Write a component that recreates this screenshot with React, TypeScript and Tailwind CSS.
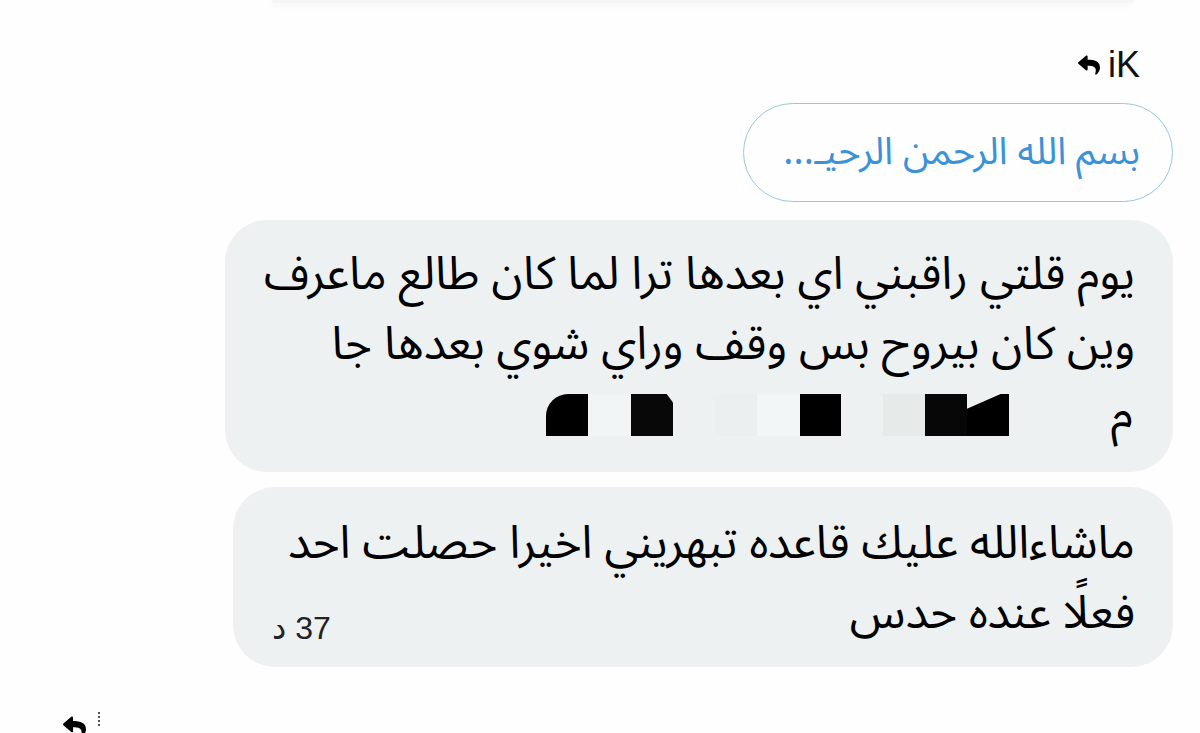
import { FaReply } from "react-icons/fa";

const arabic = { fontFamily: '"Noto Sans Arabic", "DejaVu Sans", "Noto Sans", sans-serif' };

function Redacted() {
  // line of the first bubble that was blacked out in the screenshot
  return (
    <div className="flex items-center h-[70px]" dir="ltr">
      <div className="w-[321px]" />
      <div className="w-[42px] h-[42px] bg-black rounded-tl-[22px]" />
      <div className="w-[43px] h-[42px] bg-[#f2f5f6]" />
      <div className="w-[42px] h-[42px] bg-[#080808] [clip-path:polygon(0_0,85%_0,100%_20%,100%_100%,0_100%)]" />
      <div className="w-[42px] h-[42px]" />
      <div className="w-[42px] h-[42px] bg-[#ebeff0]" />
      <div className="w-[43px] h-[42px] bg-[#f3f6f7]" />
      <div className="w-[41px] h-[42px] bg-black" />
      <div className="w-[42px] h-[42px]" />
      <div className="w-[42px] h-[42px] bg-[#e6eae9]" />
      <div className="w-[42px] h-[42px] bg-[#070707]" />
      <div className="w-[42px] h-[42px] bg-black [clip-path:polygon(0_35%,80%_0,100%_0,100%_100%,0_100%)]" />
      <div className="flex-1" />
      <span className="text-[46px] leading-none text-black pr-[40px]" style={arabic}>
        م
      </span>
    </div>
  );
}

export default function App() {
  return (
    <div className="w-[1200px] h-[733px] bg-[#fefefe] overflow-hidden flex flex-col *:shrink-0">
      <div className="ml-[272px] w-[862px] h-[3px] bg-[#f3f5f7] rounded-b-xl shadow-[0_2px_6px_rgba(0,0,0,0.06)]" />

      <div className="flex justify-end items-center gap-[8px] pr-[60px] mt-[46px] h-[32px]">
        <FaReply className="w-[22px] h-[22px] text-black" />
        <span className="text-[36px] leading-none text-[#111]" style={{ fontFamily: '"Liberation Sans", Arial, sans-serif' }}>
          iK
        </span>
      </div>

      <div className="flex justify-end pr-[27px] mt-[22px]">
        <div
          className="w-[430px] h-[99px] rounded-full border-[1.5px] border-[#98c6e6] flex items-center pr-[32px] text-[#3a93d8] text-[38px]"
          dir="rtl"
          style={arabic}
        >
          بسم الله الرحمن الرحيـ...
        </div>
      </div>

      <div className="ml-[225px] mr-[27px] mt-[18px] h-[252px] rounded-[42px] bg-[#edf1f2] pt-[20px]">
        <div dir="rtl" className="pr-[38px] text-[46px] leading-[70px] text-black" style={arabic}>
          <div>يوم قلتي راقبني اي بعدها ترا لما كان طالع ماعرف</div>
          <div>وين كان بيروح بس وقف وراي شوي بعدها جا</div>
        </div>
        <Redacted />
      </div>

      <div className="ml-[233px] mr-[27px] mt-[15px] h-[180px] rounded-[42px] bg-[#edf1f2] pt-[22px] relative">
        <div dir="rtl" className="pr-[38px] text-[46px] leading-[70px] text-black" style={arabic}>
          <div>ماشاءالله عليك قاعده تبهريني اخيرا حصلت احد</div>
          <div>فعلًا عنده حدس</div>
        </div>
        <span
          className="absolute left-[39px] top-[125px] text-[32px] leading-none text-[#222]"
          dir="rtl"
          style={{ fontFamily: '"Liberation Sans", "DejaVu Sans", sans-serif' }}
        >
          37 د
        </span>
      </div>

      <div className="flex items-start gap-[12px] pl-[63px] mt-[41px]">
        <FaReply className="w-[23px] h-[23px] text-black mt-[7px]" />
        <div className="flex flex-col gap-[2px] mt-[4px]">
          <span className="w-[2px] h-[2px] bg-[#555]" />
          <span className="w-[2px] h-[2px] bg-[#555]" />
          <span className="w-[2px] h-[2px] bg-[#555]" />
          <span className="w-[2px] h-[2px] bg-[#555]" />
        </div>
      </div>
    </div>
  );
}
